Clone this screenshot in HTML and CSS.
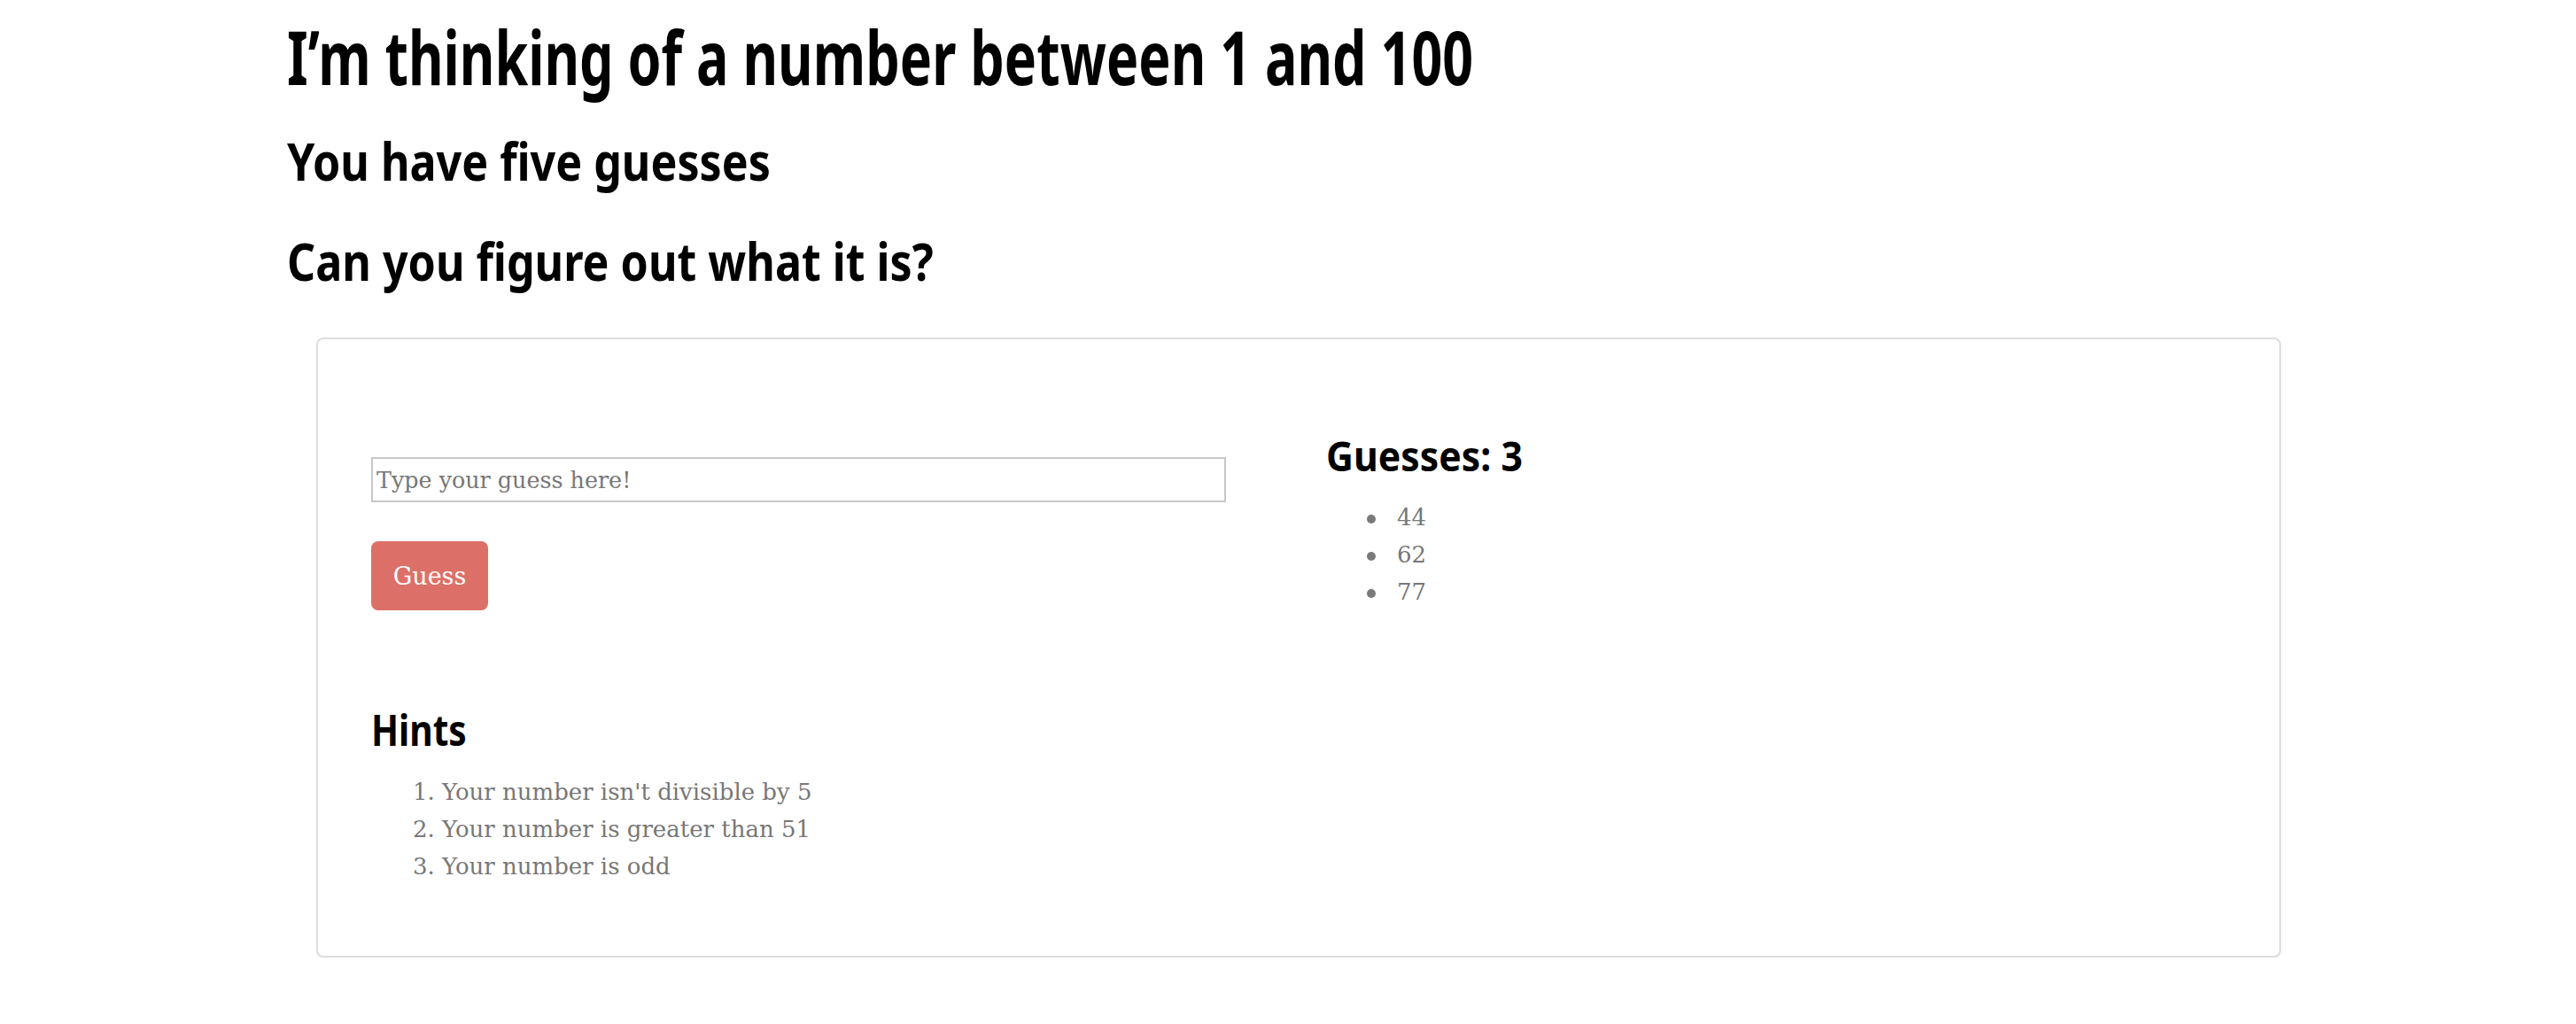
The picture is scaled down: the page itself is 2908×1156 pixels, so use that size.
FILE: index.html
```html
<!DOCTYPE html>
<html lang="en">
<head>
<meta charset="utf-8">
<title>Guess the number</title>
<link rel="stylesheet" href="styles.css">
</head>
<body>
<header class="intro">
  <h1 class="title">I’m thinking of a number between 1 and 100</h1>
  <h2 class="subtitle">You have five guesses</h2>
  <h2 class="subtitle second">Can you figure out what it is?</h2>
</header>
<main class="card">
  <section class="col left">
    <input class="guess-input" type="text" placeholder="Type your guess here!">
    <div><button class="guess-btn" type="button">Guess</button></div>
    <h3 class="hints-title">Hints</h3>
    <ol class="hints">
      <li>Your number isn't divisible by 5</li>
      <li>Your number is greater than 51</li>
      <li>Your number is odd</li>
    </ol>
  </section>
  <section class="col right">
    <h3 class="guesses-title">Guesses: 3</h3>
    <ul class="guesses">
      <li>44</li>
      <li>62</li>
      <li>77</li>
    </ul>
  </section>
</main>
</body>
</html>
```
FILE: styles.css
```css
html, body {
  margin: 0;
  padding: 0;
  background: #fff;
}
body {
  font-family: "DejaVu Serif", Georgia, serif;
  font-size: 26px;
  line-height: 42px;
  color: #777;
}
.intro {
  padding: 14px 0 0 324px;
}
.title, .subtitle, .hints-title, .guesses-title {
  font-family: "Noto Sans", sans-serif;
  font-stretch: condensed;
  font-weight: 700;
  color: #000;
  margin: 0;
  transform-origin: left center;
  white-space: nowrap;
}
.title {
  font-size: 84px;
  line-height: 100px;
  transform: scaleX(0.726);
}
.subtitle {
  font-size: 60px;
  line-height: 72px;
  margin-top: 31px;
  transform: scaleX(0.836);
}
.subtitle.second {
  margin-top: 41px;
}
.card {
  margin: 51px 0 0 357px;
  width: 2218px;
  box-sizing: border-box;
  border: 2px solid #dedede;
  border-radius: 8px;
  box-shadow: 0 2px 3px rgba(0, 0, 0, 0.06);
  padding: 58px 60px 80px 60px;
  display: grid;
  grid-template-columns: 1015px 1015px;
  column-gap: 63px;
  align-items: start;
}
.guess-input {
  display: block;
  margin: 75px 0 0 0;
  width: 965px;
  height: 51px;
  box-sizing: border-box;
  border: 2px solid #c8c8c8;
  padding: 0 4px;
  font-family: "DejaVu Serif", Georgia, serif;
  font-size: 25.4px;
  color: #555;
  outline: none;
}
.guess-input::placeholder {
  color: #777;
}
.guess-btn {
  margin-top: 44px;
  height: 78px;
  width: 132px;
  padding: 0;
  border: 0;
  border-radius: 8px;
  background: #dc7068;
  color: #fff;
  font-family: "DejaVu Serif", Georgia, serif;
  font-size: 27px;
  cursor: pointer;
}
.hints-title {
  font-size: 49px;
  line-height: 56px;
  margin-top: 106px;
  transform: scaleX(0.83);
}
.guesses-title {
  font-size: 46px;
  line-height: 52px;
  margin-top: 47px;
  transform: scaleX(0.93);
}
.hints {
  margin: 22px 0 0;
  padding-left: 80px;
}
.guesses {
  margin: 23px 0 0;
  padding-left: 80px;
  list-style: none;
}
.guesses li::before {
  content: "";
  display: inline-block;
  width: 10px;
  height: 10px;
  border-radius: 50%;
  background: #7a7a7a;
  margin-left: -34px;
  margin-right: 24px;
  vertical-align: middle;
}
```
